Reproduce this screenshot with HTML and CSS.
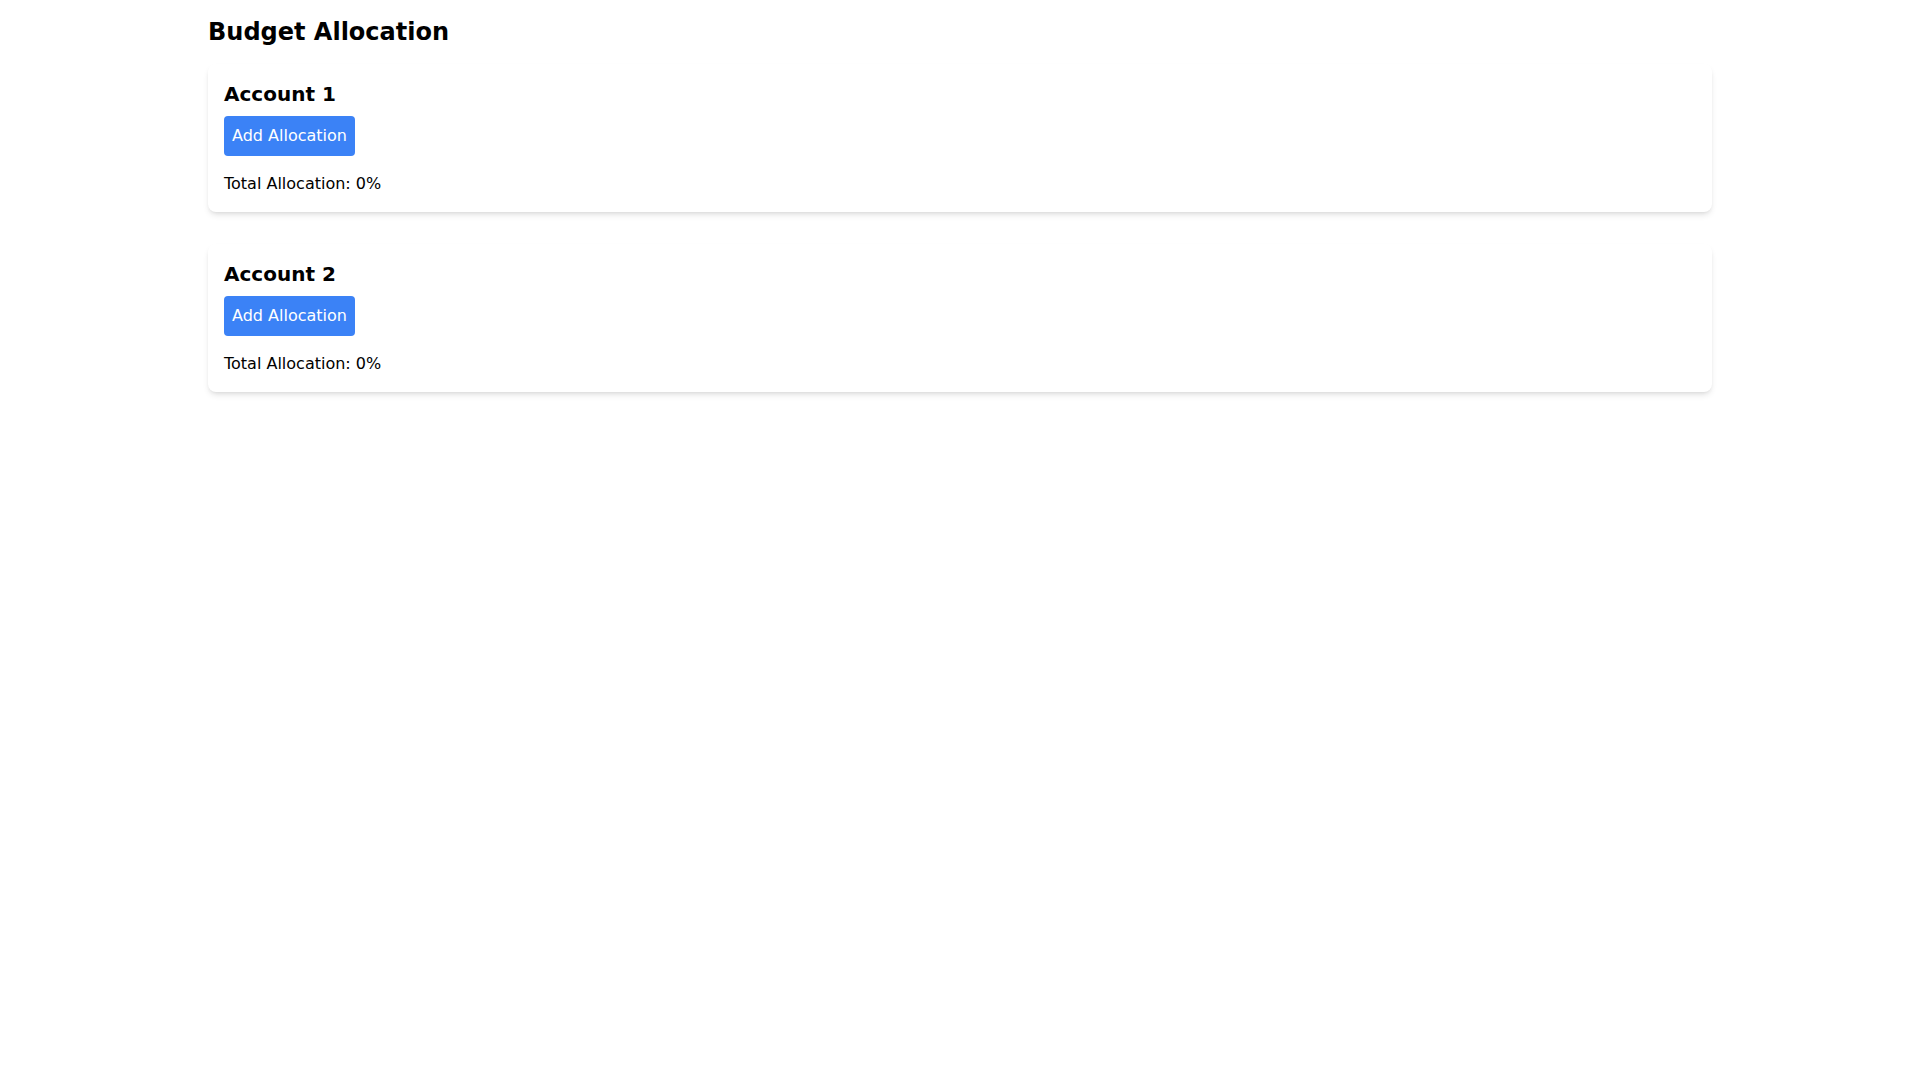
FILE: index.html
```html
<!DOCTYPE html>
<html>
<head>
<meta charset="utf-8">
<link rel="stylesheet" href="styles.css">
</head>
<body>
<div class="container">
  <h1 class="title">Budget Allocation</h1>
  <div class="card">
    <h2 class="card-title">Account 1</h2>
    <button class="btn">Add Allocation</button>
    <p class="total">Total Allocation: 0%</p>
  </div>
  <div class="card">
    <h2 class="card-title">Account 2</h2>
    <button class="btn">Add Allocation</button>
    <p class="total">Total Allocation: 0%</p>
  </div>
</div>
</body>
</html>
```
FILE: styles.css
```css
* { box-sizing: border-box; }
html, body { margin: 0; padding: 0; background: #ffffff; }
body { font-family: "DejaVu Sans", sans-serif; color: #000; }
.container {
  max-width: 1536px;
  margin: 0 auto;
  padding: 16px;
}
.title {
  margin: 0 0 16px 0;
  font-size: 24px;
  line-height: 32px;
  font-weight: 700;
}
.card {
  background: #fff;
  border-radius: 8px;
  padding: 16px;
  margin-bottom: 32px;
  box-shadow: 0 4px 6px -1px rgba(0,0,0,0.1), 0 2px 4px -2px rgba(0,0,0,0.1);
}
.card-title {
  margin: 0 0 8px 0;
  font-size: 20px;
  line-height: 28px;
  font-weight: 700;
}
.btn {
  display: block;
  font-family: "DejaVu Sans", sans-serif;
  font-size: 16px;
  line-height: 24px;
  padding: 8px;
  border: none;
  border-radius: 4px;
  background: #3b82f6;
  color: #fff;
  margin: 0 0 16px 0;
  cursor: pointer;
}
.total {
  margin: 0;
  font-size: 16px;
  line-height: 24px;
}
```
